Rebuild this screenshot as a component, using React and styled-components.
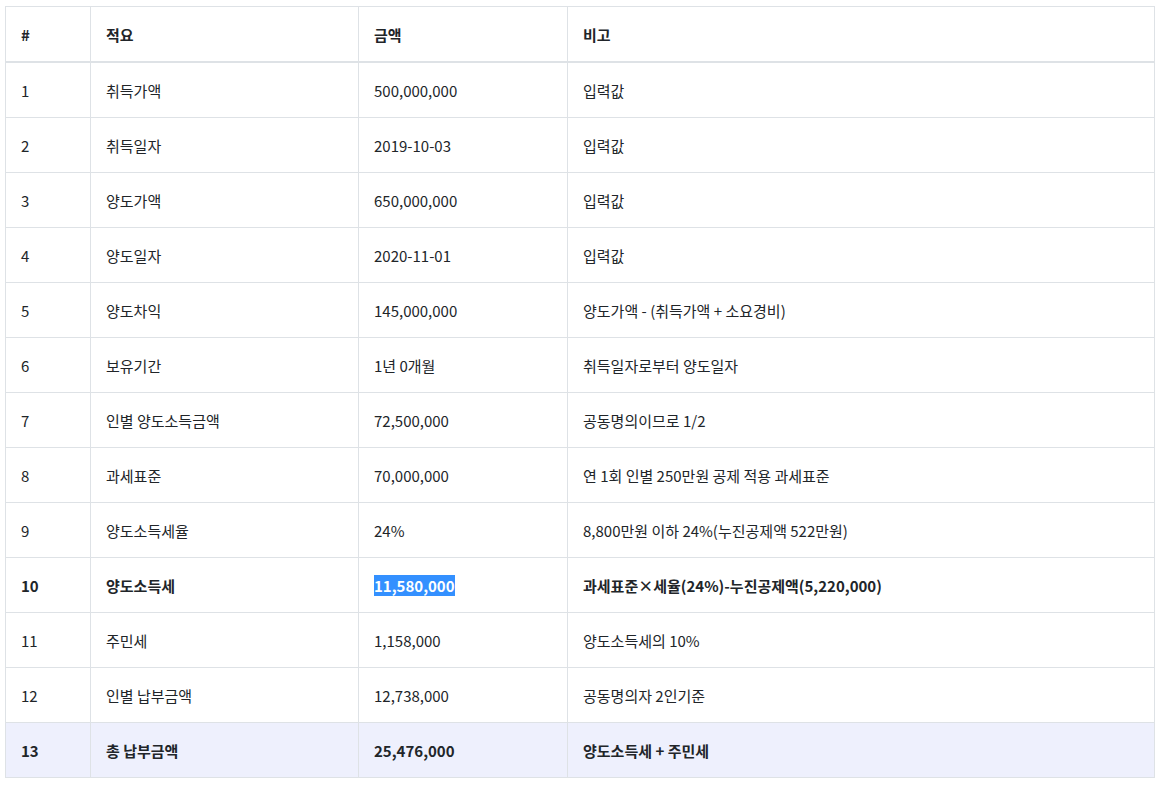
import React from "react";
import styled, { createGlobalStyle } from "styled-components";

const Global = createGlobalStyle`
  body { margin: 0; background: #fff; font-family: "Noto Sans CJK KR", "Noto Sans", sans-serif; color: #222; }
`;

const Wrap = styled.div`
  padding: 6px 5px;
`;

const Table = styled.table`
  width: 1150px;
  border-collapse: collapse;
  font-size: 15px;
  table-layout: fixed;
`;

const Th = styled.th`
  text-align: left;
  font-weight: 700;
  height: 54px;
  padding: 0 15px;
  border: 1px solid #dee2e6;
  border-bottom: 2px solid #dee2e6;
  color: #212529;
`;

const Row = styled.tr`
  background: ${({ $total }) => ($total ? "#eef0fd" : "#fff")};
  font-weight: ${({ $bold }) => ($bold ? 700 : 400)};
`;

const Td = styled.td`
  height: 54px;
  padding: 0 15px;
  border: 1px solid #dee2e6;
  color: #212529;
`;

const Mark = styled.span`
  background: #3390ff;
  color: #fff;
`;

const rows = [
  ["1", "취득가액", "500,000,000", "입력값"],
  ["2", "취득일자", "2019-10-03", "입력값"],
  ["3", "양도가액", "650,000,000", "입력값"],
  ["4", "양도일자", "2020-11-01", "입력값"],
  ["5", "양도차익", "145,000,000", "양도가액 - (취득가액 + 소요경비)"],
  ["6", "보유기간", "1년 0개월", "취득일자로부터 양도일자"],
  ["7", "인별 양도소득금액", "72,500,000", "공동명의이므로 1/2"],
  ["8", "과세표준", "70,000,000", "연 1회 인별 250만원 공제 적용 과세표준"],
  ["9", "양도소득세율", "24%", "8,800만원 이하 24%(누진공제액 522만원)"],
  ["10", "양도소득세", "11,580,000", "과세표준×세율(24%)-누진공제액(5,220,000)"],
  ["11", "주민세", "1,158,000", "양도소득세의 10%"],
  ["12", "인별 납부금액", "12,738,000", "공동명의자 2인기준"],
  ["13", "총 납부금액", "25,476,000", "양도소득세 + 주민세"],
];

export default function App() {
  return (
    <Wrap>
      <Global />
      <Table>
        <colgroup>
          <col style={{ width: 85 }} />
          <col style={{ width: 268 }} />
          <col style={{ width: 209 }} />
          <col />
        </colgroup>
        <thead>
          <tr>
            <Th>#</Th>
            <Th>적요</Th>
            <Th>금액</Th>
            <Th>비고</Th>
          </tr>
        </thead>
        <tbody>
          {rows.map((r) => (
            <Row key={r[0]} $bold={r[0] === "10" || r[0] === "13"} $total={r[0] === "13"}>
              <Td>{r[0]}</Td>
              <Td>{r[1]}</Td>
              <Td>{r[0] === "10" ? <Mark>{r[2]}</Mark> : r[2]}</Td>
              <Td>{r[3]}</Td>
            </Row>
          ))}
        </tbody>
      </Table>
    </Wrap>
  );
}
